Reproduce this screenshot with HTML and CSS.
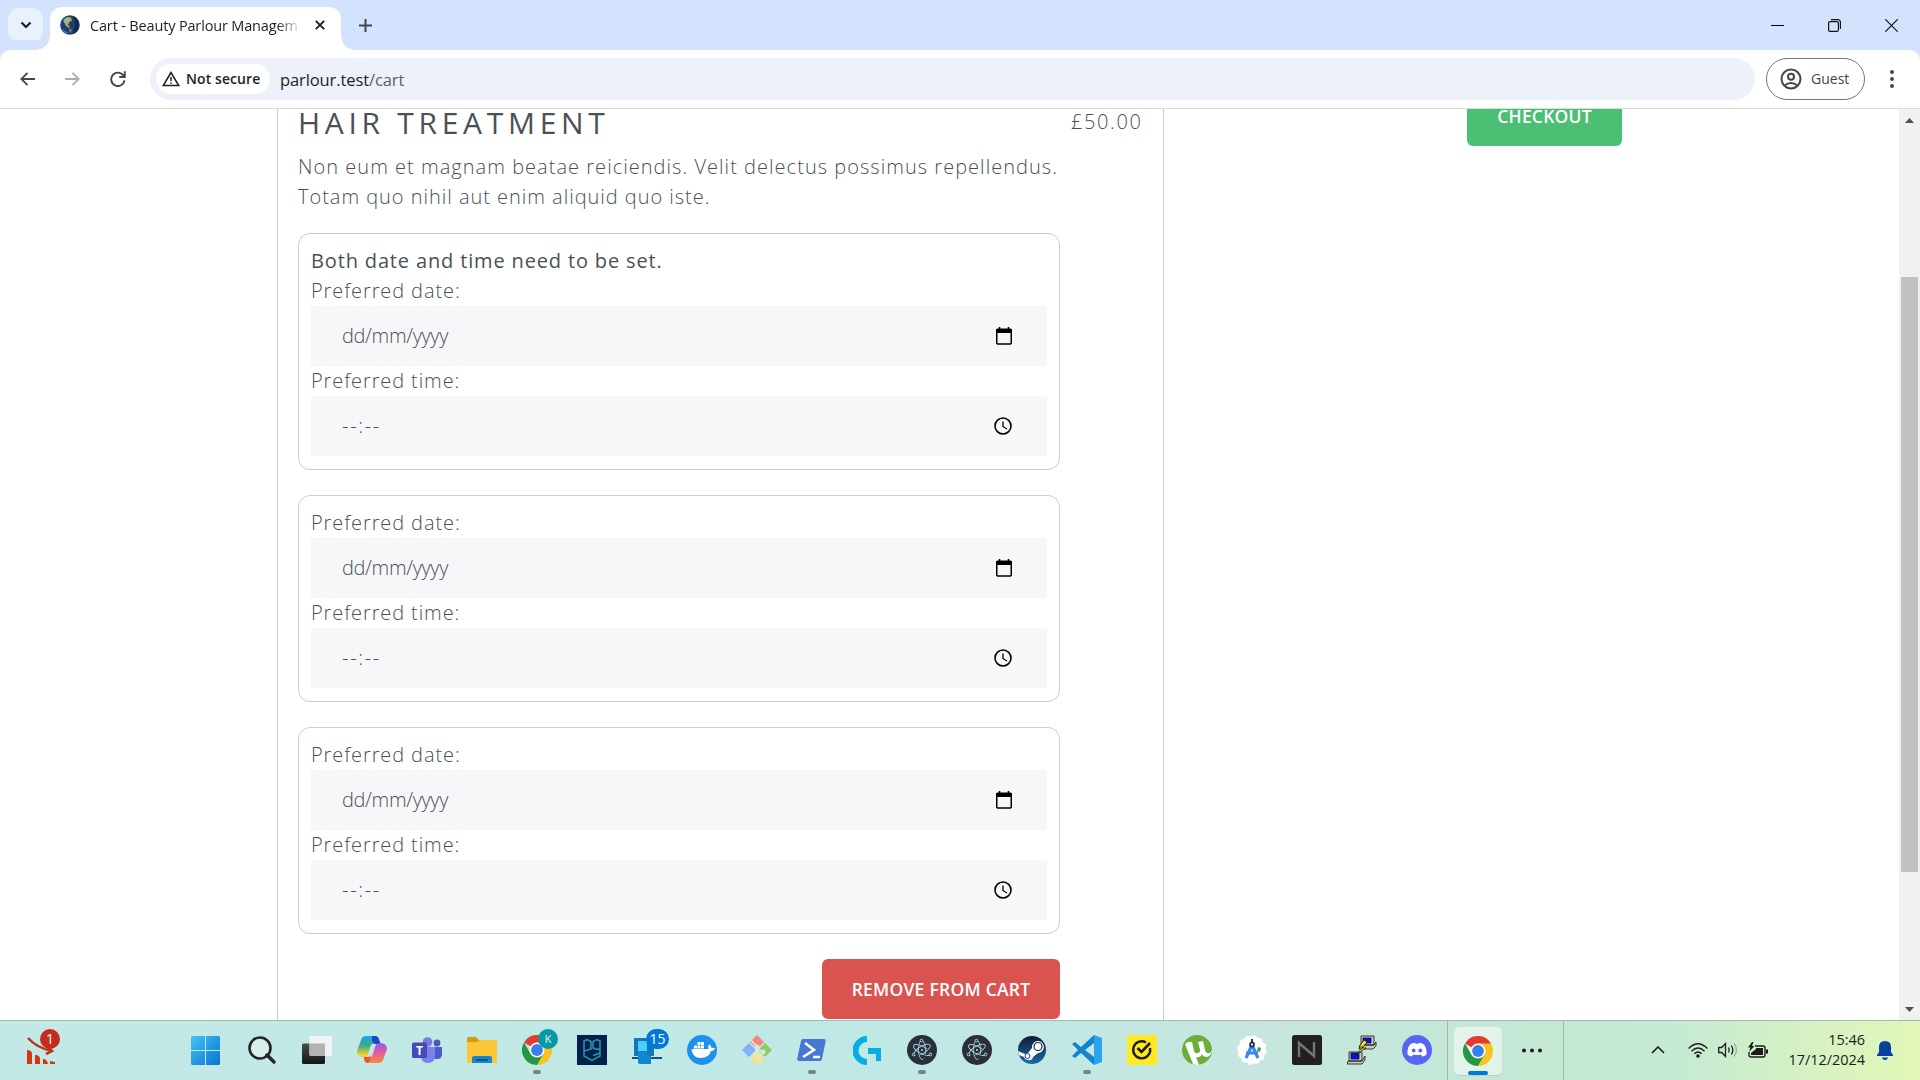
FILE: index.html
```html
<!DOCTYPE html>
<html lang="en">
<head>
<meta charset="utf-8">
<title>Cart - Beauty Parlour Management</title>
<link rel="stylesheet" href="styles.css">
</head>
<body>
<svg class="defs" aria-hidden="true">
  <symbol id="chrome" viewBox="0 0 30 30">
    <path d="M15 15 2 7.5A15 15 0 0 1 28 7.5Z" fill="#e33b2e"/>
    <path d="M15 7.5H28A15 15 0 0 1 15 30L21.5 18.7Z" fill="#fcc31e"/>
    <path d="M2 7.5A15 15 0 0 0 15 30L21.5 18.7 8.5 18.7Z" fill="#249644"/>
    <circle cx="15" cy="15" r="7.5" fill="#fff"/><circle cx="15" cy="15" r="5.9" fill="#3b7ded"/>
  </symbol>
  <symbol id="electron" viewBox="0 0 30 30">
    <circle cx="15" cy="15" r="15" fill="#2b2e3b"/>
    <g fill="none" stroke="#a5d5dc" stroke-width=".9"><ellipse cx="15" cy="15" rx="9.500" ry="3.600" transform="rotate(28 15 15)" stroke-dasharray="36 5"/><ellipse cx="15" cy="15" rx="9.500" ry="3.600" transform="rotate(88 15 15)" stroke-dasharray="36 5"/><ellipse cx="15" cy="15" rx="9.500" ry="3.600" transform="rotate(148 15 15)" stroke-dasharray="36 5"/></g>
    <circle cx="15" cy="15" r="1.1" fill="#a5d5dc"/><g fill="#2b2e3b" stroke="#a5d5dc"><circle cx="6.500" cy="19.500" r="1.300"/><circle cx="23.500" cy="19.500" r="1.300"/><circle cx="14.500" cy="5.500" r="1.300"/></g>
  </symbol>
  <symbol id="calendar" viewBox="0 0 16 18"><path d="M3.5 0v3M12.5 0v3" stroke="#000" stroke-width="1.6"/><rect x=".75" y="2.2" width="14.5" height="14.8" rx="1" fill="none" stroke="#000" stroke-width="1.5"/><path d="M0 2h16v4H0z"/></symbol>
  <symbol id="clock" viewBox="0 0 18 18"><circle cx="9" cy="9" r="8" fill="none" stroke="#000" stroke-width="1.6"/><path d="M9 4.5V9.5L13 12" fill="none" stroke="#000" stroke-width="1.3"/></symbol>
</svg>

<header class="tabstrip">
  <div class="tab-search"><svg width="12" height="8" viewBox="0 0 12 8"><path d="M1.500 1.500 6 6l4.500-4.500" fill="none" stroke="#1f1f1f" stroke-width="2.200"/></svg></div>
  <div class="tab">
    <svg width="20" height="20" viewBox="0 0 20 20"><circle cx="10" cy="10" r="9.800" fill="#1c3f77"/><path d="M3 5 7 2l4 .5 1 3-2.500 1.500L8 10l2 2-1 1-3-2-1.500-3Z" fill="#b5a856"/><path d="M5 4 9 3 8 7 5 8Z" fill="#8db9bd"/><path d="M2 13q3 4 6 4l-2 2Q3 17 2 13" fill="#3976a8"/><path d="M9 13.500l3 .5-1 4-2-2Z" fill="#6f7d56"/><path d="M13 1a10 10 0 0 1 0 18q4-9 0-18" fill="#152235" opacity=".8"/></svg>
    <span class="tab-title">Cart - Beauty Parlour Managem</span>
    <svg width="10" height="10" viewBox="0 0 10 10"><path d="m.8.8 8.400 8.400M9.200.8.8 9.200" stroke="#1f1f1f" stroke-width="1.900"/></svg>
  </div>
  <svg class="new-tab" width="13" height="13" viewBox="0 0 13 13"><path d="M6.500 0v13M0 6.500h13" stroke="#474747" stroke-width="2"/></svg>
  <div class="window-controls">
    <svg width="13" height="13" viewBox="0 0 13 13"><path d="M0 6.500h13" stroke="#000"/></svg>
    <svg width="13" height="13" viewBox="0 0 13 13"><g fill="none" stroke="#111" stroke-width="1.200"><rect x=".6" y="2.600" width="9.800" height="9.800" rx="1.500"/><path d="M3 .6h7a2.400 2.400 0 0 1 2.400 2.400v7"/></g></svg>
    <svg width="13" height="13" viewBox="0 0 13 13"><path d="m.3.3 12.400 12.400M12.700.3.3 12.700" stroke="#111" stroke-width="1.200"/></svg>
  </div>
</header>

<nav class="toolbar">
  <svg class="back" width="15" height="14" viewBox="0 0 15 14"><path d="M7.500.8 1.300 7l6.200 6.200M1.300 7H15" fill="none" stroke="#474747" stroke-width="1.900"/></svg>
  <svg class="forward" width="15" height="14" viewBox="0 0 15 14"><path d="M7.500.8 13.700 7l-6.200 6.200M13.700 7H0" fill="none" stroke="#adadad" stroke-width="1.900"/></svg>
  <svg class="reload" width="16" height="16" viewBox="0 0 16 16"><path d="M13.700 5A6.700 6.700 0 1 0 14.500 9.300" fill="none" stroke="#474747" stroke-width="1.900"/><path d="M14.800.3v5.700H9.200" fill="none" stroke="#474747" stroke-width="1.900"/></svg>
  <div class="omnibox">
    <div class="security"><svg width="18" height="16" viewBox="0 0 18 16"><path d="M9 1.500 1.300 14.600h15.400Z" fill="none" stroke="#1f1f1f" stroke-width="1.500"/><path d="M9 6v4M9 11.300v1.500" stroke="#1f1f1f" stroke-width="1.500"/></svg><span class="security-text">Not secure</span></div>
    <span class="url">parlour.test<span class="url-path">/cart</span></span>
  </div>
  <div class="profile"><svg width="22" height="22" viewBox="0 0 22 22"><g fill="none" stroke="#474747" stroke-width="2"><circle cx="11" cy="11" r="9.500"/><circle cx="11" cy="8.800" r="3"/><path d="M4.500 17.500q6.500-5 13 0"/></g></svg><span class="profile-text">Guest</span></div>
  <svg class="menu" width="4" height="18" viewBox="0 0 4 18"><g fill="#474747"><circle cx="2" cy="2" r="2"/><circle cx="2" cy="9" r="2"/><circle cx="2" cy="16" r="2"/></g></svg>
</nav>

<div class="viewport">
  <main class="cart">
    <article class="item">
      <div class="details">
        <h2 class="title">HAIR TREATMENT</h2>
        <p class="description">Non eum et magnam beatae reiciendis. Velit delectus possimus repellendus.<br><span class="last-line">Totam quo nihil aut enim aliquid quo iste.</span></p>
        <div class="slots">
          <section class="slot">
            <strong class="notice">Both date and time need to be set.</strong>
            <span class="label">Preferred date:</span>
            <div class="field date"><span>dd/mm/yyyy</span><svg width="16" height="18"><use href="#calendar"/></svg></div>
            <span class="label">Preferred time:</span>
            <div class="field time"><span>--:--</span><svg width="18" height="18"><use href="#clock"/></svg></div>
          </section>
          <section class="slot">
            <span class="label">Preferred date:</span>
            <div class="field date"><span>dd/mm/yyyy</span><svg width="16" height="18"><use href="#calendar"/></svg></div>
            <span class="label">Preferred time:</span>
            <div class="field time"><span>--:--</span><svg width="18" height="18"><use href="#clock"/></svg></div>
          </section>
          <section class="slot">
            <span class="label">Preferred date:</span>
            <div class="field date"><span>dd/mm/yyyy</span><svg width="16" height="18"><use href="#calendar"/></svg></div>
            <span class="label">Preferred time:</span>
            <div class="field time"><span>--:--</span><svg width="18" height="18"><use href="#clock"/></svg></div>
          </section>
          <button class="button remove">REMOVE FROM CART</button>
        </div>
      </div>
      <div class="price">£50.00</div>
    </article>
  </main>
  <aside class="summary"><button class="button checkout">CHECKOUT</button></aside>
  <div class="scrollbar">
    <svg width="9" height="5" viewBox="0 0 9 5"><path d="M0 5 4.500 0 9 5Z" fill="#505050"/></svg>
    <div class="thumb"></div>
    <svg class="down" width="9" height="5" viewBox="0 0 9 5"><path d="M0 0 4.500 5 9 0Z" fill="#505050"/></svg>
  </div>
</div>

<footer class="taskbar">
  <div class="widget"><svg width="28" height="28" viewBox="0 0 28 28"><path d="M1 2q9 10 24 13M20 10l5 5-6 3" fill="none" stroke="#b93a1a" stroke-width="2.600"/><path d="M0 14q4 0 5 3v11H0ZM8 19q5 0 5 4v5H8ZM16 23q4 0 5 5h-5ZM23 25l5 1v2h-5Z" fill="#d03a12"/></svg><span class="badge red">1</span></div>
  <div class="apps">
    <div class="app start"><svg width="29" height="29" viewBox="0 0 29 29"><defs><linearGradient id="win" x2="1" y2="1"><stop stop-color="#40c4f5"/><stop offset="1" stop-color="#0a74d0"/></linearGradient></defs><path d="M1 0H14V14H0V1ZM15 0H28L29 1V14H15ZM0 15H14V29H1L0 28ZM15 15H29V28L28 29H15Z" fill="url(#win)"/></svg></div>
    <div class="app"><svg width="28" height="29" viewBox="0 0 28 29"><circle cx="12" cy="12" r="10.500" fill="#d9efec" stroke="#252525" stroke-width="2.600"/><path d="m19 19 7 7" stroke="#252525" stroke-width="3.400" stroke-linecap="round"/></svg></div>
    <div class="app"><svg width="30" height="28" viewBox="0 0 30 28"><defs><linearGradient id="dk" y2="1" x2="0"><stop stop-color="#4a4a4a"/><stop offset="1" stop-color="#161616"/></linearGradient></defs><rect y="7.500" width="23" height="20.500" rx="1.500" fill="url(#dk)"/><rect x="7.500" width="22.500" height="20" rx="1.500" fill="#f2f3f3"/><path d="M7.500 7.500H23V20H9q-1.500 0-1.500-1.500Z" fill="#b3b3b3"/></svg></div>
    <div class="app"><svg width="30" height="28" viewBox="0 0 30 28"><defs><linearGradient id="cpa" y2="1" x2="0"><stop stop-color="#18a6ee"/><stop offset=".45" stop-color="#3cab83"/><stop offset=".9" stop-color="#f6d22c"/></linearGradient><linearGradient id="cpb" y2="1" x2="0"><stop stop-color="#9b58e8"/><stop offset=".5" stop-color="#e45b9b"/><stop offset="1" stop-color="#fb8a36"/></linearGradient></defs><path d="M9 0h9q3 0 4 4l1 3-7 1q-2 0-3 4l-2 6q-1 4-5 3-6 0-6-6L4 4Q5 0 9 0Z" fill="url(#cpa)"/><path d="M15 0h4q3 1 3 4l2 4h-5q-3 0-4-4Z" fill="#1846ce"/><path d="M23 7q7 0 7 6l-4 11q-1 3-5 3H11q-3 0-4-5h5q3 0 4-5l2-6q1-4 5-4Z" fill="url(#cpb)"/><path d="M7 21h4q2 0 3-2l-1 5q-1 4-4 2.500-2-1-2-5.500Z" fill="#ee513c"/></svg></div>
    <div class="app"><svg width="30" height="27" viewBox="0 0 30 27"><circle cx="15.500" cy="5" r="4.800" fill="#777be1"/><circle cx="25" cy="6" r="3.400" fill="#5055b8"/><path d="M20 10h10v7q0 5-5 5h-5Z" fill="#5059c9"/><path d="M9 10h14v9q0 7-7 7t-7-7Z" fill="#7b83eb"/><rect y="5.500" width="15" height="15.500" rx="1.500" fill="#464bb9"/><text x="7.500" y="17.500" class="teams-t" text-anchor="middle">T</text></svg></div>
    <div class="app"><svg width="30" height="27" viewBox="0 0 30 27"><path d="M0 2Q0 0 2 0h7l3 3h18v6H0Z" fill="#d9980f"/><path d="M0 5h10l3-2h17v23H0Z" fill="#fcc737"/><path d="M5 26v-5q0-2 2-2h16q2 0 2 2v5Z" fill="#1786d0"/><path d="M9 23h12" stroke="#095391" stroke-width="2"/></svg></div>
    <div class="app"><svg width="30" height="30"><use href="#chrome"/></svg><span class="badge teal">K</span><i class="run"></i></div>
    <div class="app"><svg width="30" height="30" viewBox="0 0 30 30"><path d="M0 0h30v30H0Z" fill="#03204a"/><path d="M7 16V6l3-1.500 4 2V14l-7 2v5l8 4.500 8-4.500V6l-3-1.500-4 2V13l4 1.500 3-1M23 18l-7 2.500" fill="none" stroke="#2496b4" stroke-width="1.500"/></svg></div>
    <div class="app"><svg width="30" height="27" viewBox="0 0 30 27"><path d="M2 1h20v18H2Z" fill="#1277bd"/><path d="M0 20h30v2H0Z" fill="#075785"/><path d="M6 4h9v15h4v8H8q-2 0-2-2Z" fill="#1386d1"/><path d="M6 4h9v10H6Z" fill="#4bd0f5"/></svg><span class="badge blue">15</span></div>
    <div class="app"><svg width="30" height="30" viewBox="0 0 30 30"><circle cx="15" cy="15" r="15" fill="#1d91ed"/><path d="M4.500 14h17q-1-3 1-4.500 2 1.500 2 3.500 2-.5 3.500.5-1 2.500-4 2.500-2 7-10.500 7-8 0-9-9Z" fill="#fff"/><path d="M7 10.500h3v3H7ZM10.500 10.500h3v3h-3ZM14 10.500h3v3h-3ZM10.500 7h3v3h-3ZM14 7h3v3h-3Z" fill="#fff"/></svg></div>
    <div class="app"><svg width="30" height="30" viewBox="0 0 30 30"><path d="m15 0 7 7-6 6h-2L8 7Z" fill="#f7837b"/><path d="m23 8 7 7-7 7-6-6v-2Z" fill="#8fcb63"/><path d="m7 8 6 6v2l-6 6-7-7Z" fill="#80b3fa"/><path d="M14 17h2l6 6-7 7-7-7Z" fill="#f9e282"/><path d="m9 5 6 7v12M15 13l7 5" fill="none" stroke="#d8e8df" stroke-width="1.800"/><g fill="#d8e8df"><circle cx="15" cy="12" r="2.500"/><circle cx="15" cy="22" r="2.500"/><circle cx="21" cy="17" r="2.500"/></g></svg></div>
    <div class="app"><svg width="29" height="22" viewBox="0 0 29 22"><path d="M6 0h21q2 0 1.700 2L25 20q-.5 2-2 2H2q-2 0-1.800-2L4 2Q4.500 0 6 0Z" fill="#4677d3"/><path d="m8 4 9 7-11 7M16 18h7" fill="none" stroke="#fff" stroke-width="2.600"/></svg><i class="run"></i></div>
    <div class="app"><svg width="28" height="29" viewBox="0 0 28 29"><path d="M14 0v6a8.300 8.300 0 0 0 0 17v6A14.500 14.500 0 0 1 14 0Z" fill="#06aee2"/><path d="M15 12h13v13h-5v-7h-8Z" fill="#06aee2"/></svg></div>
    <div class="app"><svg width="30" height="30"><use href="#electron"/></svg><i class="run"></i></div>
    <div class="app"><svg width="30" height="30"><use href="#electron"/></svg></div>
    <div class="app"><svg width="28" height="28" viewBox="0 0 28 28"><defs><linearGradient id="stm" y2="1" x2="0"><stop stop-color="#111b3c"/><stop offset="1" stop-color="#126da5"/></linearGradient></defs><circle cx="14" cy="14" r="14" fill="url(#stm)"/><path d="m0 15 7 3 3-1 4-5a6 6 0 1 1 6 5l-5 4q-1 4-5 3-3 0-4-3l-5-2Z" fill="#fff"/><circle cx="20" cy="10.500" r="4" fill="#fff" stroke="#17294c" stroke-width="1.200"/><circle cx="9.500" cy="20" r="2.500" fill="none" stroke="#17417b"/></svg></div>
    <div class="app"><svg width="30" height="30" viewBox="0 0 30 30"><path d="M22 0 9 12 3 7 0 9l6 6-6 6 3 2 6-5 13 12V22l-9-7 9-7Z" fill="#1284cf"/><path d="m22 0 8 3v24l-8 3Z" fill="#27a4eb"/></svg><i class="run"></i></div>
    <div class="app"><svg width="30" height="30" viewBox="0 0 30 30"><rect width="30" height="30" rx="2.500" fill="#ffe921"/><path d="M19 7.500A8.500 8.500 0 1 0 23 13" fill="none" stroke="#1c1b14" stroke-width="2.400"/><path d="m10.500 13 4 4 8.500-9" fill="none" stroke="#1c1b14" stroke-width="2.600"/></svg></div>
    <div class="app"><svg width="30" height="30" viewBox="0 0 30 30"><circle cx="15" cy="15" r="15" fill="#6cae3c"/><path d="M3 9q3-3 7-2l2 9q1 3 4 2 3-1 2-4l-2-7 5-1 2 9q1 4 5 3l2-3q-1 6-5 7-4 0-5-3-2 4-6 3l3 8q-4 0-6-1Z" fill="#fff"/></svg></div>
    <div class="app"><svg width="30" height="30" viewBox="0 0 30 30"><circle cx="15" cy="15" r="13.700" fill="#fff" stroke="#fff" stroke-dasharray="3.600 3.570" stroke-width="2"/><path d="m21 12 3 1-1 4-3-1Z" fill="#2f9f56"/><path d="m15 10-6 13M15 10l6 13M9 18h12" stroke="#3d84f5" stroke-width="3.200"/><circle cx="15" cy="9.500" r="2" fill="#fff" stroke="#23384c" stroke-width="1.800"/><path d="M15 4v3" stroke="#23384c" stroke-width="2"/></svg></div>
    <div class="app"><svg width="30" height="30" viewBox="0 0 30 30"><rect width="30" height="30" rx="2.500" fill="#202020"/><path d="M7 22V8L22 21V7" fill="none" stroke="#747474" stroke-width="2.400"/></svg></div>
    <div class="app"><svg width="30" height="30" viewBox="0 0 30 30"><g stroke="#111" stroke-width=".8"><path d="M14 1h13v9H14ZM13 10h14l2-3v4l-3 3H12ZM2 17h13v9H2ZM1 26h14l3-5v4l-3 4H0Z" fill="#c9c9c9"/><path d="M16 3h8v5h-8ZM4 18h8v6H4Z" fill="#0909e9"/><path d="m17 5-5 7h4l-7 8 10-7h-4l5-6Z" fill="#ffeb18"/></g></svg></div>
    <div class="app"><svg width="30" height="30" viewBox="0 0 30 30"><circle cx="15" cy="15" r="15" fill="#5865f2"/><path d="M8 9.500q3-2 5-1.700l.6 1h2.800l.6-1q3 0 5 1.700 3 4 2.500 10-2 2-4.500 2l-1-2q-4 1-8 0l-1 2q-2.500 0-4.500-2Q5 13.500 8 9.500Z" fill="#fff"/><circle cx="11.700" cy="15.500" r="1.900" fill="#5865f2"/><circle cx="18.300" cy="15.500" r="1.900" fill="#5865f2"/></svg></div>
  </div>
  <div class="active-group"><div class="active-app"><svg width="30" height="30"><use href="#chrome"/></svg><i class="run wide"></i></div><svg class="more" width="20" height="5" viewBox="0 0 20 5"><g fill="#1c1c1c"><circle cx="2" cy="2.500" r="2"/><circle cx="10" cy="2.500" r="2"/><circle cx="18" cy="2.500" r="2"/></g></svg></div>
  <div class="tray">
    <svg class="chevron" width="14" height="8" viewBox="0 0 14 8"><path d="m1 7 6-6 6 6" fill="none" stroke="#1c1c1c" stroke-width="1.600"/></svg>
    <svg class="wifi" width="20" height="15" viewBox="0 0 20 15"><g fill="none" stroke="#1c1c1c" stroke-width="1.300"><path d="M.6 5.500q9.400-9.400 18.800 0M3.500 8.200q6.500-6.500 13 0M6.300 10.800q3.700-3.600 7.400 0"/></g><circle cx="10" cy="13" r="1.800" fill="#1c1c1c"/></svg>
    <svg class="sound" width="20" height="16" viewBox="0 0 20 16"><g fill="none" stroke="#1c1c1c" stroke-width="1.300"><path d="M.7 5.500h3L7.500 1.500v13L3.700 10.500h-3Z"/><path d="M10.500 5.500q1.500 2.500 0 5M13.300 3.500q3 4.500 0 9"/><path d="M16 1.500q5 6.500 0 13" stroke="#8fb59d"/></g></svg>
    <svg class="battery" width="20" height="16" viewBox="0 0 20 16"><path d="M7 4h8q2 0 2 2v7q0 2-2 2H3q-2 0-2-2v-3" fill="none" stroke="#1c1c1c" stroke-width="1.400"/><path d="M8 6h7v7H3v-2l5-4Z" fill="#1c1c1c"/><path d="M18 7.500h2v4h-2Z" fill="#1c1c1c"/><path d="M4 0 0 5.500h2.500L1 10l5.500-6H4L5.500 0Z" fill="#1c1c1c"/></svg>
    <div class="datetime"><span class="hour">15:46</span><span class="day">17/12/2024</span></div>
    <svg class="bell" width="16" height="19" viewBox="0 0 16 19"><path d="M8 0q6 0 6 6v5l2 3v1H0v-1l2-3V6Q2 0 8 0ZM5 16.500h6q-.5 2.500-3 2.500t-3-2.500Z" fill="#08409d"/></svg>
  </div>
</footer>
</body>
</html>
```
FILE: styles.css
```css
* { box-sizing: border-box; }
body { margin: 0; width: 1920px; height: 1080px; overflow: hidden; display: flex; flex-direction: column; background: #fff; font-family: "Open Sans", "Noto Sans", sans-serif; }
svg { display: block; flex: none; }
.defs { position: absolute; width: 0; height: 0; }

.tabstrip { height: 50px; flex: none; display: flex; align-items: center; padding-left: 8px; background: #d3e3fd; }
.tab-search { width: 35px; height: 34px; border-radius: 11px; background: #eaf1fe; display: flex; align-items: center; justify-content: center; }
.tab { width: 291px; height: 43px; margin: 7px 0 0 7px; padding: 0 15px 8px 10px; border-radius: 12px 12px 0 0; background: #fff; display: flex; align-items: center; position: relative; z-index: 1; }
.tab::before, .tab::after { content: ""; position: absolute; bottom: 0; width: 14px; height: 14px; }
.tab::before { left: -14px; background: radial-gradient(circle at 0 0, transparent 13.500px, #fff 14px); }
.tab::after { right: -14px; background: radial-gradient(circle at 100% 0, transparent 13.500px, #fff 14px); }
.tab-title { width: 212px; margin: 0 13px 0 10px; padding-top: 1px; overflow: hidden; white-space: nowrap; font-size: 14.500px; letter-spacing: -.16px; color: #1f1f1f; mask-image: linear-gradient(90deg, #000 88%, transparent); }
.new-tab { margin-left: 18px; }
.window-controls { margin-left: auto; padding-right: 22px; display: flex; gap: 44px; }

.toolbar { height: 59px; flex: none; display: flex; align-items: center; border-bottom: 1px solid #dcdcdc; background: #fff; box-shadow: 0 -10px 0 0 #d3e3fd; border-radius: 10px 10px 0 0; }
.back { margin-left: 20px; }
.forward { margin-left: 30px; }
.reload { margin: 0 0 1px 30px; }
.omnibox { width: 1605px; height: 42px; margin-left: 24px; padding-left: 6px; border-radius: 21px; background: #ecf1fa; display: flex; align-items: center; }
.security { width: 114px; height: 30px; padding-left: 6px; border-radius: 15px; background: #fff; display: flex; align-items: center; gap: 6px; white-space: nowrap; }
.security-text { font-size: 14px; font-weight: 550; letter-spacing: .08px; color: #1f1f1f; padding-bottom: 1px; }
.url { margin-left: 10px; font-size: 16.500px; letter-spacing: -.1px; color: #1f1f1f; }
.url-path { color: #5c5f63; }
.profile { width: 99px; height: 42px; margin-left: 11px; padding-left: 13px; border: 1px solid #747775; border-radius: 21px; display: flex; align-items: center; gap: 9px; }
.profile-text { font-size: 14px; color: #474747; padding-bottom: 1px; }
.menu { margin-left: 25px; }

.viewport { height: 911px; flex: none; overflow: hidden; display: flex; align-items: flex-start; }
.cart { width: 887px; height: 911px; margin-left: 277px; padding: 0 20px; border: solid #ccc; border-width: 0 1px; color: #4b5056; font-size: 20px; font-weight: 300; line-height: 30px; }
.item { display: flex; gap: 11px; }
.details { width: 762px; }
.title { margin: 0; font-size: 30px; line-height: 28px; font-weight: 500; letter-spacing: 4.700px; white-space: nowrap; }
.description { margin: 15px 0 21px; letter-spacing: 1.030px; white-space: nowrap; }
.last-line { letter-spacing: .970px; }
.slots { display: flex; flex-direction: column; gap: 25px; }
.slot { border: 1px solid #ccc; border-radius: 12px; padding: 12px 12px 13px; display: flex; flex-direction: column; letter-spacing: .9px; }
.notice { font-weight: 500; letter-spacing: .85px; }
.field { height: 60px; padding: 0 35px 0 31px; background: #f7f7f9; display: flex; align-items: center; justify-content: space-between; letter-spacing: -.35px; }
.time { letter-spacing: 1.700px; }
.button { border: 0; height: 60px; border-radius: 6px; color: #fff; font: 550 17.500px "Open Sans", "Noto Sans", sans-serif; padding: 0 0 1px; }
.remove { align-self: flex-end; width: 238px; background: #d9534f; letter-spacing: .25px; }
.checkout { width: 155px; background: #4bbf73; padding-bottom: 1px; letter-spacing: .2px; }
.price { height: 24px; line-height: 25px; letter-spacing: 1.600px; }
.summary { margin: -23px 0 0 303px; }
.scrollbar { width: 21px; height: 911px; margin-left: auto; padding: 9px 0 8px; background: #f1f1f1; display: flex; flex-direction: column; align-items: center; }
.thumb { width: 17px; height: 595px; margin-top: 154px; background: #c1c1c1; }
.down { margin-top: auto; }

.taskbar { height: 60px; flex: none; display: flex; border-top: 1px solid #a4b9b5; background: linear-gradient(90deg, #c2e9e5 0, #c0e8e5 950px, #c7e6df 1260px, #c4e8d5 1500px, #c6ead3 1680px, #dcf4be 1860px, #e2f6b6 100%); }
.widget { width: 178px; padding: 15px 0 0 27px; position: relative; }
.apps { display: flex; }
.app { width: 55px; height: 58px; padding-left: 2px; display: flex; align-items: center; justify-content: center; position: relative; }
.start { padding-left: 0; }
.run { position: absolute; bottom: 5px; width: 8px; height: 4px; border-radius: 2px; background: #748684; }
.badge { position: absolute; border-radius: 10px; height: 20px; width: 20px; color: #fff; font-size: 14px; line-height: 20px; text-align: center; }
.red { left: 40px; top: 8px; background: #c42b1c; }
.teal { left: 30px; top: 8px; background: #0897a5; font-size: 11px; font-weight: 600; color: #b8e3e4; }
.blue { left: 28px; top: 8px; width: 23px; background: #0078d4; }
.teams-t { font: 700 12px "Open Sans", sans-serif; fill: #fff; }
.active-group { width: 117px; margin-left: 4px; border: solid #9dbcac; border-width: 0 1px; display: flex; align-items: center; }
.active-app { width: 48px; height: 48px; margin-left: 6px; border-radius: 5px; background: #e2f4ea; box-shadow: 0 1px 1px #b4d1c2; display: flex; align-items: center; justify-content: center; position: relative; }
.wide { width: 20px; bottom: 0; background: #0078d4; }
.more { margin-left: 20px; }
.tray { flex: 1; height: 58px; display: flex; align-items: center; }
.chevron { margin-left: 87px; }
.wifi { margin-left: 23px; }
.sound { margin-left: 10px; }
.battery { margin-left: 10px; }
.datetime { width: 97px; display: flex; flex-direction: column; align-items: flex-end; line-height: 20px; font-size: 14.500px; letter-spacing: -.050px; color: #1c1c1c; }
.bell { margin-left: 12px; }
```
